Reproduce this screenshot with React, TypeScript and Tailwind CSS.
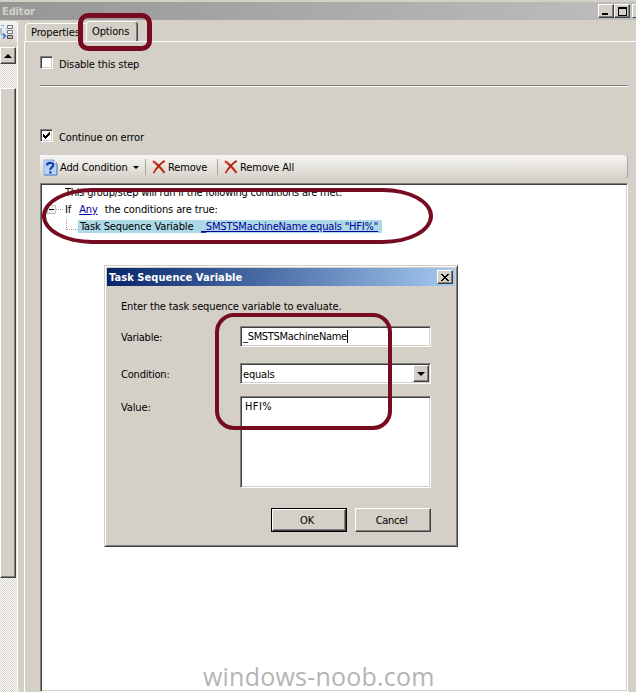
import type { ReactNode } from "react";

const raised = "border border-t-white border-l-white border-r-[#404040] border-b-[#404040] bg-[#d4d0c8] shadow-[inset_-1px_-1px_0_#808080]";
const sunken = "border border-t-[#808080] border-l-[#808080] border-r-white border-b-white bg-white shadow-[inset_1px_1px_0_#404040,inset_-1px_-1px_0_#d4d0c8]";
const dither = "bg-[repeating-conic-gradient(#d4d0c8_0_25%,#ffffff_0_50%)] bg-[length:2px_2px]";

function CheckRow({ label, checked }: { label: string; checked?: boolean }) {
  return (
    <div className="flex h-[13px] items-center">
      <span className={`flex h-[13px] w-[13px] shrink-0 items-center justify-center ${sunken}`}>
        {checked && (
          <svg width="7" height="7" viewBox="0 0 7 7" shapeRendering="crispEdges">
            <path d="M0 2h1v1h1v1h1v-1h1v-1h1v-1h1v-1h1v3h-1v1h-1v1h-1v1h-1v1h-1v-1h-1v-1h-1z" fill="#000" />
          </svg>
        )}
      </span>
      <span className="ml-1.5 pt-[3px]">{label}</span>
    </div>
  );
}

function RemoveIcon() {
  return (
    <svg width="14" height="14" viewBox="0 0 14 14" fill="none" className="shrink-0">
      <path d="M1 1.2C4 3 8.500 7.500 12.500 12.800" stroke="#c02a16" strokeWidth="2.200" />
      <path d="M12.800.8C8.500 3.500 4.500 8 1.600 13" stroke="#b51f10" strokeWidth="1.900" />
      <path d="M.8 1.800 4 4.200M1.400 12.500l2-2.500" stroke="#dd6954" />
    </svg>
  );
}

function HelpIcon() {
  return (
    <svg width="15" height="17" viewBox="0 0 15 17" className="shrink-0">
      <path d="M1 1h10l3 3v12H1z" fill="#b9d3f6" stroke="#8fb0dc" />
      <path d="M1 16h13V5" fill="none" stroke="#5f86c2" />
      <path d="M10.500 1v3.500H14" fill="#fff" stroke="#7f9fcb" />
      <path d="M4 6.600C4 3 10.200 3 10.200 6.200 10.200 8.400 7.300 8 7.300 11" fill="none" stroke="#143fa5" strokeWidth="2.200" />
      <path d="M6.200 12.300h2.300v2.200H6.200z" fill="#143fa5" />
    </svg>
  );
}

function SequenceIcon() {
  return (
    <svg width="14" height="17" viewBox="0 0 14 17" fill="none">
      <path d="M4 1.500H1.500M1 4v4.500Q1 12 5 12" stroke="#6fa0e4" />
      <path d="m3 9.500 2.500 2.500L3 14.500" stroke="#3277d8" strokeWidth="1.500" />
      <path d="M7.500 1.500h5v3h-5zM7.500 6.500h5v3h-5z" fill="#f5f5ef" stroke="#6d7480" />
      <path d="M7.500 11.500h5v3h-5z" fill="#d5bd76" stroke="#454b73" />
    </svg>
  );
}

function DownArrow() {
  return <span className="block h-0 w-0 border-x-4 border-t-4 border-x-transparent border-t-black" />;
}

function LeftPane() {
  return (
    <div className="flex w-[18px] shrink-0 flex-col border-r border-white">
      <div className="mb-[3px] flex h-[23px] items-center rounded-r-sm bg-linear-to-b from-[#f5f4f1] to-[#d8d4cc]">
        <SequenceIcon />
      </div>
      <div className={`flex min-h-0 flex-1 flex-col ${dither}`}>
        <div className={`flex h-[17px] w-4 shrink-0 items-center justify-center ${raised}`}>
          <span className="h-0 w-0 border-x-4 border-b-4 border-x-transparent border-b-black" />
        </div>
        <div className="h-[24px] shrink-0" />
        <div className={`h-[490px] w-4 shrink-0 ${raised}`} />
      </div>
    </div>
  );
}

function Tabs() {
  return (
    <div className="flex h-[20px] items-end pl-px">
      <div className="flex h-[18px] w-[61px] items-center overflow-hidden rounded-tl-sm border-t border-l border-white pl-[5px]">
        <span className="whitespace-nowrap">Properties</span>
      </div>
      <div className="-mb-px flex h-[21px] w-[52px] items-start rounded-t-sm border-t border-l border-r border-t-white border-l-white border-r-[#404040] bg-[#d4d0c8] pt-[3px] pl-[5px] shadow-[inset_-1px_0_0_#808080]">
        Options
      </div>
    </div>
  );
}

function ToolButton({ icon, children }: { icon: ReactNode; children: ReactNode }) {
  return (
    <div className="flex items-center gap-0.5 whitespace-nowrap tracking-[-0.15px]">
      {icon}
      <span>{children}</span>
    </div>
  );
}

function ConditionToolbar() {
  return (
    <div className="flex h-6 shrink-0 items-center rounded-r-sm border-r border-r-[#aaa69e] bg-linear-to-b from-[#f7f6f3] to-[#d6d2ca] pl-[3px]">
      <div className="w-[88px]">
        <ToolButton icon={<HelpIcon />}>Add Condition</ToolButton>
      </div>
      <span className="ml-0.5 h-0 w-0 border-x-[3px] border-t-[3px] border-x-transparent border-t-black" />
      <span className="ml-1.5 h-4 w-px bg-[#a6a69e]" />
      <div className="ml-1.5 w-[64px]">
        <ToolButton icon={<RemoveIcon />}>Remove</ToolButton>
      </div>
      <span className="ml-px h-4 w-px bg-[#a6a69e]" />
      <div className="ml-1.5">
        <ToolButton icon={<RemoveIcon />}>Remove All</ToolButton>
      </div>
    </div>
  );
}

function ConditionList() {
  return (
    <div className={`min-h-0 flex-1 whitespace-nowrap px-0.5 pt-[2px] ${sunken}`}>
      <div className="h-[15px] pl-[22px] tracking-[-0.24px]">This group/step will run if the following conditions are met:</div>
      <div className="flex h-[17px] items-center pl-1 tracking-[-0.13px]">
        <span className="flex h-[9px] w-[9px] items-center justify-center border border-[#c4c4c4] bg-[#f2f1ed]">
          <span className="h-px w-[5px] bg-black" />
        </span>
        <span className="w-[7px] border-t border-dotted border-[#a0a0a0]" />
        <span className="ml-[2px]">If</span>
        <span className="ml-2 text-[#00009c] underline">Any</span>
        <span className="ml-[7px]">the conditions are true:</span>
      </div>
      <div className="flex h-[17px] items-center pl-[23px]">
        <span className="mb-[5px] h-[11px] w-3 border-b border-l border-dotted border-[#a0a0a0]" />
        <div className="flex h-[13px] w-[304px] items-center bg-[#add8e6] pl-0.5">
          <span className="w-[121px] tracking-[-0.13px]">Task Sequence Variable</span>
          <span className="tracking-[-0.17px] text-[#00009c] underline">_SMSTSMachineName equals "HFI%"</span>
        </div>
      </div>
    </div>
  );
}

function OptionsPage() {
  return (
    <div className="flex min-h-0 flex-1 flex-col border-t border-l border-white pt-[14px] pr-2 pl-[15px]">
      <CheckRow label="Disable this step" />
      <div className="mt-4 h-0.5 shrink-0 border-t border-b border-t-[#808080] border-b-white" />
      <div className="h-[42px] shrink-0" />
      <CheckRow label="Continue on error" checked />
      <div className="h-[13px] shrink-0" />
      <ConditionToolbar />
      <div className="h-1 shrink-0" />
      <ConditionList />
    </div>
  );
}

function VariableDialog() {
  return (
    <div className="absolute top-[265px] left-[104px] flex h-[282px] w-[354px] flex-col border border-t-[#d4d0c8] border-l-[#d4d0c8] border-r-[#404040] border-b-[#404040] bg-[#d4d0c8] p-0.5 shadow-[inset_1px_1px_0_#fff,inset_-1px_-1px_0_#808080]">
      <div className="flex h-[18px] shrink-0 items-center justify-between bg-linear-to-r from-[#0a246a] to-[#a6caf0] pr-0.5 pl-0.5 font-bold text-white">
        <span className="tracking-[0.08px]">Task Sequence Variable</span>
        <span className={`flex h-[14px] w-4 items-center justify-center ${raised}`}>
          <svg width="8" height="7" viewBox="0 0 8 7" shapeRendering="crispEdges">
            <path d="M0 0h2v1h1v1h2V1h1V0h2v1H7v1H6v1H5v1h1v1h1v1h1v1H6V6H5V5H3v1H2v1H0V6h1V5h1V4h1V3H2V2H1V1H0z" fill="#000" />
          </svg>
        </span>
      </div>
      <div className="flex flex-col pt-[14px] pr-6 pl-[14px]">
        <p className="h-[14px] leading-[14px] tracking-[-0.13px]">Enter the task sequence variable to evaluate.</p>
        <div className="mt-3 flex h-[21px]">
          <span className="w-[119px] pt-[5px] tracking-[-0.25px]">Variable:</span>
          <div className={`flex flex-1 items-center pl-0.5 tracking-[-0.3px] ${sunken}`}>
            _SMSTSMachineName
            <span className="h-[13px] w-px bg-black" />
          </div>
        </div>
        <div className="mt-4 flex h-[21px]">
          <span className="w-[119px] pt-[5px] tracking-[-0.2px]">Condition:</span>
          <div className={`flex flex-1 items-center justify-between p-[1px] pl-0.5 tracking-[-0.2px] ${sunken}`}>
            <span className="pt-px">equals</span>
            <span className={`flex h-[17px] w-4 items-center justify-center ${raised}`}>
              <DownArrow />
            </span>
          </div>
        </div>
        <div className="mt-3 flex h-[92px]">
          <span className="w-[119px] pt-[5px]">Value:</span>
          <div className={`flex-1 pt-[3px] pl-1 tracking-[0.4px] ${sunken}`}>HFI%</div>
        </div>
        <div className="mt-5 flex justify-end gap-2">
          <div className="h-6 w-[76px] border border-black">
            <div className={`flex h-full items-center justify-center pr-1 ${raised}`}>OK</div>
          </div>
          <div className={`flex h-6 w-[76px] items-center justify-center pr-[3px] tracking-[-0.3px] ${raised}`}>Cancel</div>
        </div>
      </div>
    </div>
  );
}

export default function App() {
  return (
    <div className="relative flex h-[692px] w-[636px] flex-col overflow-hidden bg-[#d4d0c8] pt-0.5 font-['DejaVu_Sans_Condensed','DejaVu_Sans',sans-serif] text-[11px] leading-[13px] tracking-[-0.13px] text-black font-stretch-condensed">
      <div className="flex h-[18px] shrink-0 items-center bg-linear-to-r from-[#969696] to-[#bebebe] pl-0.5">
        <span className="flex-1 font-bold text-[#d4d0c8]">Editor</span>
        <span className={`flex h-[14px] w-4 items-end pb-0.5 pl-[3px] ${raised}`}>
          <span className="h-0.5 w-1.5 bg-black" />
        </span>
        <span className={`flex h-[14px] w-4 items-center justify-center ${raised}`}>
          <span className="h-[9px] w-[9px] border border-t-2 border-black" />
        </span>
        <span className="ml-0.5 h-[14px] w-1 border-t border-b border-l border-t-white border-b-[#404040] border-l-white bg-[#d4d0c8]" />
      </div>
      <div className="flex min-h-0 flex-1 pt-px">
        <LeftPane />
        <div className="ml-1.5 flex min-w-0 flex-1 flex-col">
          <Tabs />
          <OptionsPage />
        </div>
      </div>

      <VariableDialog />

      <div className="absolute top-[662px] left-[203px] font-[family-name:'Open_Sans'] text-[25px] leading-7 tracking-[0.22px] whitespace-nowrap text-[#b4b4b4] font-stretch-normal">windows-noob.com</div>

      {/* annotation rings */}
      <div className="absolute top-[13px] left-[78px] h-[38px] w-[74px] rounded-[10px] border-[5px] border-[#770b20]" />
      <div className="absolute top-[188px] left-[42px] h-[56px] w-[391px] rounded-[50px/28px] border-4 border-[#770b20]" />
      <div className="absolute top-[313px] left-[215px] h-[117px] w-[177px] rounded-[19px] border-4 border-[#770b20]" />
    </div>
  );
}
